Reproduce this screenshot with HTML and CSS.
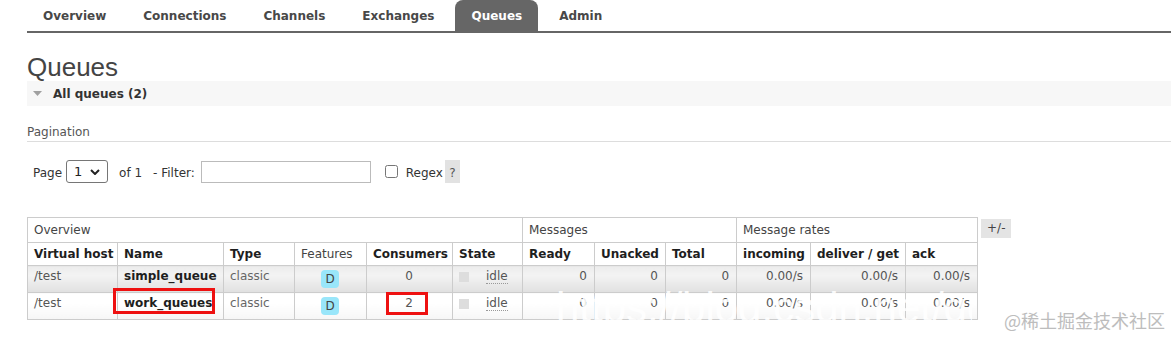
FILE: index.html
```html
<!DOCTYPE html>
<html lang="en">
  <head>
    <meta charset="UTF-8" />
    <meta name="viewport" content="width=device-width, initial-scale=1.0" />
    <title>Queues</title>
    <link rel="stylesheet" href="styles.css">
  </head>
  <body>
    <ul class="tabs">
      <li><a href="#">Overview</a></li>
      <li><a href="#">Connections</a></li>
      <li><a href="#">Channels</a></li>
      <li><a href="#">Exchanges</a></li>
      <li class="active"><a href="#">Queues</a></li>
      <li><a href="#">Admin</a></li>
    </ul>

    <div class="main">
      <h1>Queues</h1>
      <div class="section-head">
        <svg class="tri" width="9" height="5" viewBox="0 0 9 5"><path d="M0 0H9L4.5 5Z" fill="#a0a0a0"/></svg>
        All queues (2)
      </div>

      <h3 class="sub-head">Pagination</h3>
      <div class="pager">
        <span class="txt">Page</span>
        <span class="select-box">
          <select><option>1</option></select>
          <svg class="chev" width="10" height="6" viewBox="0 0 10 6"><path d="M1 1L5 5L9 1" fill="none" stroke="#222" stroke-width="2"/></svg>
        </span>
        <span class="txt of">of 1</span>
        <span class="txt filter-label">- Filter:</span>
        <input class="filter" type="text" />
        <input class="check" type="checkbox" />
        <span class="txt regex">Regex</span>
        <span class="help">?</span>
      </div>

      <div class="table-wrap">
        <div class="table-box">
          <table class="list">
            <colgroup>
              <col style="width:90px"><col style="width:106px"><col style="width:71px">
              <col style="width:72px"><col style="width:86px"><col style="width:70px">
              <col style="width:72px"><col style="width:71px"><col style="width:71px">
              <col style="width:74px"><col style="width:95px"><col style="width:72px">
            </colgroup>
            <tr class="group">
              <th colspan="6">Overview</th>
              <th colspan="3">Messages</th>
              <th colspan="3">Message rates</th>
            </tr>
            <tr class="heads">
              <th>Virtual host</th>
              <th>Name</th>
              <th>Type</th>
              <th class="plain">Features</th>
              <th>Consumers</th>
              <th>State</th>
              <th>Ready</th>
              <th>Unacked</th>
              <th>Total</th>
              <th>incoming</th>
              <th>deliver / get</th>
              <th>ack</th>
            </tr>
            <tr class="alt1">
              <td class="vhost">/test</td>
              <td class="name">simple_queue</td>
              <td class="type">classic</td>
              <td class="c"><abbr class="feat">D</abbr></td>
              <td class="c">0</td>
              <td><span class="dot"></span><abbr class="state">idle</abbr></td>
              <td class="r">0</td>
              <td class="r">0</td>
              <td class="r">0</td>
              <td class="r">0.00/s</td>
              <td class="r">0.00/s</td>
              <td class="r">0.00/s</td>
            </tr>
            <tr class="alt2">
              <td class="vhost">/test</td>
              <td class="name">work_queues</td>
              <td class="type">classic</td>
              <td class="c"><abbr class="feat">D</abbr></td>
              <td class="c">2</td>
              <td><span class="dot"></span><abbr class="state">idle</abbr></td>
              <td class="r">0</td>
              <td class="r">0</td>
              <td class="r">0</td>
              <td class="r">0.00/s</td>
              <td class="r">0.00/s</td>
              <td class="r">0.00/s</td>
            </tr>
          </table>
          <span class="mark mark-name"></span>
          <span class="mark mark-consumers"></span>
        </div>
        <span class="toggle">+/-</span>
      </div>
    </div>

    <div class="wm-url">https://blog.csdn.net/qq_41</div>
    <div class="wm-site">@稀土掘金技术社区</div>
  </body>
</html>
```

FILE: styles.css
```css
* {
  box-sizing: border-box;
}
html,
body {
  overflow: hidden;
}
body {
  position: relative;
  margin: 0;
  width: 1171px;
  height: 338px;
  background-color: #ffffff;
  color: #484848;
  font-family: "DejaVu Sans", Verdana, sans-serif;
  font-size: 12px;
}
.tabs {
  display: flex;
  margin: 0 0 0 27px;
  padding: 0;
  list-style: none;
  height: 33px;
  border-bottom: 2px solid #666666;
}
.tabs li {
  margin-right: 5px;
}
.tabs a {
  display: block;
  padding: 2px 16px 0;
  line-height: 29px;
  color: #484848;
  font-weight: bold;
  text-decoration: none;
  border-radius: 8px 8px 0 0;
}
.tabs .active a {
  background-color: #666666;
  color: #ffffff;
}
.main {
  padding-left: 27px;
}
h1 {
  margin: 21px 0 0;
  font-family: "Liberation Sans", Arial, sans-serif;
  font-size: 26px;
  line-height: 27px;
  font-weight: normal;
  color: #444444;
}
.section-head {
  display: flex;
  align-items: center;
  height: 25px;
  padding-left: 6px;
  background-color: #f7f7f7;
  font-weight: bold;
  color: #333333;
}
.section-head .tri {
  margin-right: 11px;
}
.sub-head {
  margin: 17px 0 0;
  line-height: 18px;
  font-size: 12px;
  font-weight: normal;
  color: #555555;
  border-bottom: 1px solid #dddddd;
}
.pager {
  display: flex;
  align-items: center;
  height: 23px;
  margin-top: 18px;
  padding-left: 6px;
  color: #333333;
}
.pager .txt {
  padding-top: 3px;
}
.select-box {
  position: relative;
  margin-left: 4px;
}
.select-box select {
  appearance: none;
  -webkit-appearance: none;
  display: block;
  width: 42px;
  height: 23px;
  padding: 0 0 0 7px;
  border: 1px solid #767676;
  border-radius: 3px;
  background: #ffffff;
  font-family: "DejaVu Sans", Verdana, sans-serif;
  font-size: 13px;
  color: #222222;
}
.select-box .chev {
  position: absolute;
  right: 8px;
  top: 9px;
}
.of {
  margin-left: 11px;
}
.filter-label {
  margin-left: 11px;
}
.filter {
  margin: 0 0 0 6px;
  width: 170px;
  height: 22px;
  border: 1px solid #bbbbbb;
  padding: 0 4px;
}
.check {
  margin: 0 0 0 14px;
  width: 13px;
  height: 13px;
}
.regex {
  margin-left: 8px;
}
.help {
  margin-left: 2px;
  width: 15px;
  height: 23px;
  padding-top: 3px;
  line-height: 20px;
  text-align: center;
  background-color: #e2e2e2;
  color: #555555;
}
.table-wrap {
  display: flex;
  align-items: flex-start;
  margin-top: 34px;
}
.table-box {
  position: relative;
}
.list {
  border-collapse: collapse;
  table-layout: fixed;
  width: 951px;
}
.list th,
.list td {
  border: 1px solid #cccccc;
  padding: 0 7px 0 6px;
  white-space: nowrap;
  overflow: visible;
}
.list .group th {
  height: 25px;
  text-align: left;
  font-weight: normal;
  color: #444444;
}
.list .heads th {
  height: 23px;
  text-align: left;
  font-weight: bold;
  color: #1e1e1e;
}
.list .heads th.plain {
  font-weight: normal;
  color: #444444;
}
.list td {
  height: 27px;
  padding-top: 3px;
  line-height: 14px;
  vertical-align: top;
  color: #555555;
}
.alt1 td {
  background-image: linear-gradient(#ececec, #f3f3f3 35%, #e0e0e0);
}
.alt2 td {
  background-image: linear-gradient(#ffffff, #ffffff 40%, #f6f6f6);
}
.list td.name {
  font-weight: bold;
  color: #1e1e1e;
}
.list td.type {
  color: #666666;
}
.list td.c {
  text-align: center;
}
.list td.r {
  text-align: right;
}
.feat {
  display: inline-block;
  width: 18px;
  height: 18px;
  line-height: 18px;
  border-radius: 4px;
  background-color: #99e6fa;
  color: #444444;
  text-decoration: none;
  vertical-align: top;
  margin-top: 1px;
}
.dot {
  display: inline-block;
  width: 10px;
  height: 10px;
  margin: 3px 17px 0 0;
  background-color: #dddddd;
  vertical-align: top;
}
.state {
  text-decoration: none;
  border-bottom: 1px dotted #999999;
}
.mark {
  position: absolute;
  border: 3px solid #ee1111;
}
.mark-name {
  left: 86px;
  top: 71px;
  width: 102px;
  height: 26px;
}
.mark-consumers {
  left: 359px;
  top: 75px;
  width: 42px;
  height: 23px;
}
.toggle {
  margin: 2px 0 0 3px;
  padding: 0 6px;
  height: 19px;
  line-height: 19px;
  background-color: #e4e4e4;
  color: #444444;
}
.wm-url {
  position: absolute;
  left: 556px;
  top: 287px;
  width: 416px;
  overflow: hidden;
  white-space: nowrap;
  font-family: "Liberation Sans", Arial, sans-serif;
  font-size: 42px;
  line-height: 42px;
  color: rgba(255, 255, 255, 0.88);
}
.wm-site {
  position: absolute;
  left: 1004px;
  top: 307px;
  white-space: nowrap;
  font-family: "Noto Sans CJK SC", sans-serif;
  font-size: 18px;
  line-height: 26px;
  color: #bdbdbd;
}
```
